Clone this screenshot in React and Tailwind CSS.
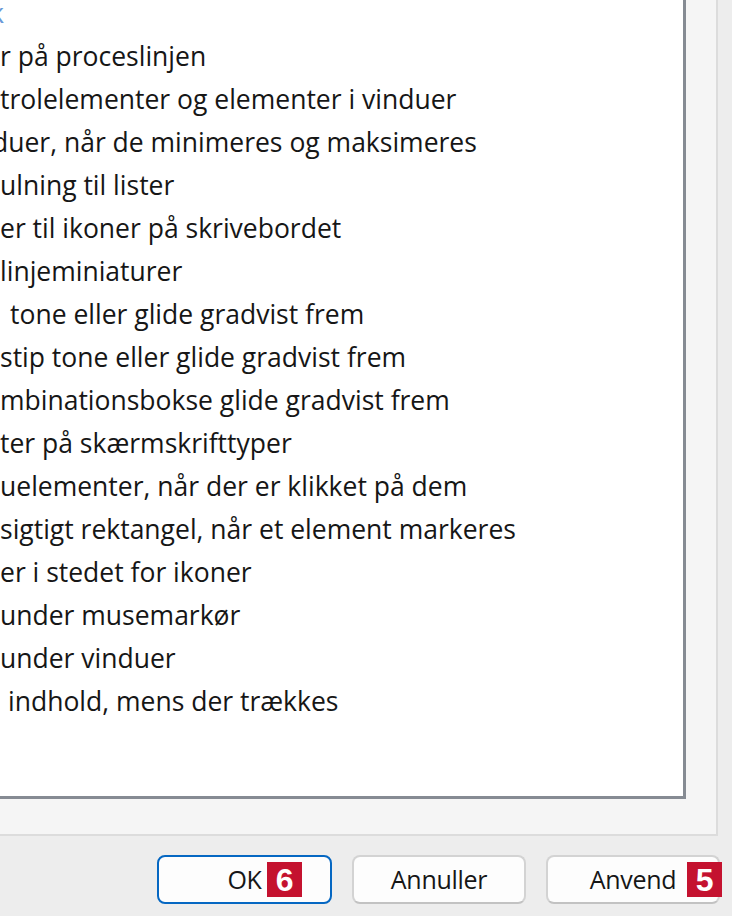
import React from "react";

const lines = [
  { t: "k", cls: "-ml-[10px] text-[#6a9ad8]" },
  { t: "r på proceslinjen" },
  { t: "trolelementer og elementer i vinduer" },
  { t: "duer, når de minimeres og maksimeres", cls: "-ml-[8px]" },
  { t: "ulning til lister" },
  { t: "er til ikoner på skrivebordet" },
  { t: "linjeminiaturer" },
  { t: "tone eller glide gradvist frem", cls: "pl-[10px]" },
  { t: "stip tone eller glide gradvist frem" },
  { t: "mbinationsbokse glide gradvist frem" },
  { t: "ter på skærmskrifttyper" },
  { t: "uelementer, når der er klikket på dem" },
  { t: "sigtigt rektangel, når et element markeres" },
  { t: "er i stedet for ikoner" },
  { t: "under musemarkør" },
  { t: "under vinduer" },
  { t: "indhold, mens der trækkes", cls: "pl-[8px]" },
];

function Badge({ n, className }) {
  return (
    <div
      className={
        "absolute top-[5px] w-[35px] h-[35px] bg-[#c4122f] text-white flex items-center justify-center text-[32px] font-bold leading-none font-['Liberation_Sans',sans-serif] " +
        className
      }
    >
      {n}
    </div>
  );
}

export default function App() {
  return (
    <div className="w-[732px] h-[916px] bg-[#ededed] overflow-hidden font-['Open_Sans',sans-serif] text-[#161616]">
      <div className="w-[718px] h-[836px] bg-[#f5f5f5] border-r-2 border-b-2 border-[#dcdcdc]">
        <div className="w-[686px] h-[799px] bg-white border-r-[3px] border-b-[3px] border-[#868b93] overflow-hidden">
          <div className="-mt-[8px] flex flex-col">
            {lines.map((l, i) => (
              <div
                key={i}
                className={
                  "h-[43px] leading-[43px] text-[26.5px] font-medium whitespace-nowrap " +
                  (l.cls || "")
                }
              >
                {l.t}
              </div>
            ))}
          </div>
        </div>
      </div>
      <div className="flex pt-[19px] pl-[157px] gap-[20px]">
        <div className="relative w-[175px] h-[49px] rounded-[8px] border-2 border-[#0567c2] bg-[#fdfdfd] flex items-center justify-center text-[25px] font-medium tracking-[-0.3px]">
          OK
          <Badge n="6" className="left-[108px]" />
        </div>
        <div className="relative w-[174px] h-[49px] rounded-[8px] border-2 border-[#d3d3d3] border-b-[#c2c2c2] bg-[#fdfdfd] flex items-center justify-center text-[25px] font-medium tracking-[-0.3px]">
          Annuller
        </div>
        <div className="relative w-[174px] h-[49px] rounded-[8px] border-2 border-[#d3d3d3] border-b-[#c2c2c2] bg-[#fdfdfd] flex items-center justify-center text-[25px] font-medium tracking-[-0.3px]">
          Anvend
          <Badge n="5" className="left-[139px]" />
        </div>
      </div>
    </div>
  );
}
